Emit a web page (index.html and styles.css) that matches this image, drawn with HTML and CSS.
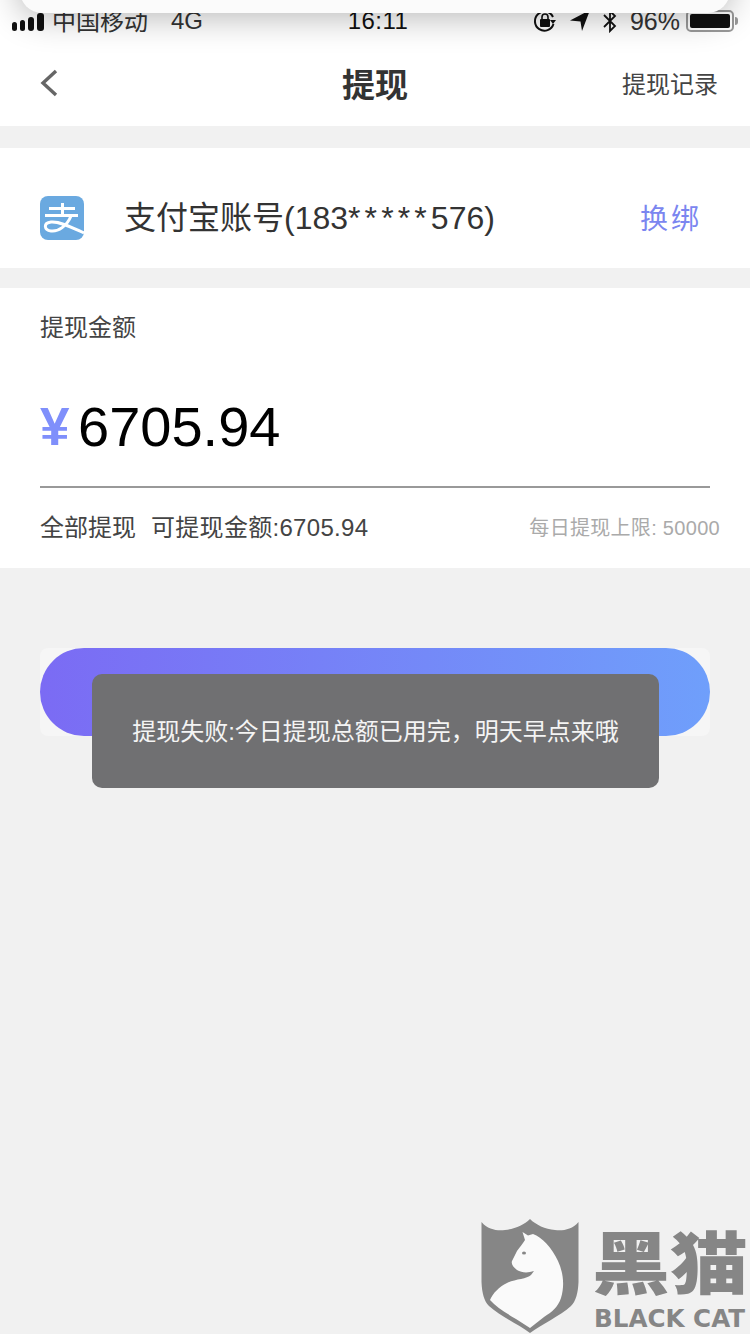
FILE: index.html
```html
<!DOCTYPE html>
<html lang="zh-CN">
<head>
  <meta charset="UTF-8">
  <meta name="viewport" content="width=device-width, initial-scale=1.0">
  <title>提现</title>
  <link rel="stylesheet" href="styles.css">
</head>
<body>
  <div class="notice-edge"></div>

  <div class="status-bar">
    <div class="status-left">
      <div class="signal"><i></i><i></i><i></i><i></i></div>
      <span class="carrier">中国移动</span>
      <span class="net">4G</span>
    </div>
    <div class="status-time">16:11</div>
    <div class="status-right">
      <svg class="ico-lock" width="24" height="24" viewBox="0 0 24 24">
        <path d="M20 8 A9.5 9.5 0 1 0 20.5 15" fill="none" stroke="#111" stroke-width="2"/>
        <path d="M17 11 L23 11 L20 15 Z" fill="#111"/>
        <rect x="7" y="10" width="10" height="8" rx="1" fill="#111"/>
        <path d="M9 10 V8 A3 3 0 0 1 15 8 V10" fill="none" stroke="#111" stroke-width="1.6"/>
      </svg>
      <svg class="ico-loc" width="20" height="22" viewBox="0 0 20 22">
        <path d="M0 10.500 L20 0 L12 21 L10.500 11.500 Z" fill="#111"/>
      </svg>
      <svg class="ico-bt" width="16" height="24" viewBox="0 0 16 24">
        <path d="M2 6 L13 17 L8 22 V2 L13 7 L2 18" fill="none" stroke="#111" stroke-width="1.8"/>
      </svg>
      <span class="battery-text">96%</span>
      <div class="battery"><div class="battery-fill"></div></div>
    </div>
  </div>

  <header class="nav">
    <svg class="back" width="18" height="28" viewBox="0 0 18 28">
      <path d="M16 2 L3 14 L16 26" fill="none" stroke="#666" stroke-width="3.4"/>
    </svg>
    <h1 class="nav-title">提现</h1>
    <a class="nav-link">提现记录</a>
  </header>

  <section class="account">
    <svg class="alipay" width="44" height="44" viewBox="0 0 44 44">
      <path d="M8 0 H36 A8 8 0 0 1 44 8 V36 A8 8 0 0 1 36 44 H8 A8 8 0 0 1 0 36 V8 A8 8 0 0 1 8 0 Z" fill="#6aa9e0"/>
      <path d="M9 12.500 H35 M5 19.500 H38 M22.500 7 V19.500" fill="none" stroke="#fff" stroke-width="3"/>
      <path d="M31 20 C27 30 18 36 11 35 C4 34 3 27 11 26 C20 25 33 32 44 37" fill="none" stroke="#fff" stroke-width="3"/>
    </svg>
    <div class="account-name">支付宝账号(183<span class="mask">*****</span>576)</div>
    <a class="account-change">换绑</a>
  </section>

  <section class="amount-card">
    <div class="amount-label">提现金额</div>
    <div class="amount-row">
      <span class="yen">¥</span>
      <span class="amount">6705.94</span>
    </div>
    <div class="amount-foot">
      <div class="foot-left">
        <a class="take-all">全部提现</a>
        <span class="can-take">可提现金额:6705.94</span>
      </div>
      <div class="foot-limit">每日提现上限: 50000</div>
    </div>
  </section>

  <div class="submit-wrap">
    <div class="submit"></div>
  </div>

  <div class="toast">提现失败:今日提现总额已用完&#65292;明天早点来哦</div>

  <div class="watermark">
    <svg class="wm-shield" width="110" height="119" viewBox="0 0 110 119">
      <path d="M1.500 7 C8 15 18 16 25 15 C35 14 44 10 50 4 C56 10 65 14 75 15 C82 16 92 15 98.500 7 V67 C98 78 96 86 91 91 C80 101 62 109 50 118 C38 109 20 101 9 91 C4 86 2 78 1.500 67 Z" fill="#868686"/>
      <path d="M42.500 17 L48 20.500 L53 19 C62 22 72 33 78 46 C83 57 85 70 81 83 C78 92 72 97 64 102 L50 113 L36 104 C26 98 16 92 10 85 C13 78 19 72 27 68 C35 64 47 64 51 60 L54 56 C48 58 42 58 37 55 C33 52 31 49 32 46 L37 36 C40 32 43 28 45 25 Z" fill="#fafafa"/>
      <ellipse cx="44" cy="38" rx="2" ry="1.500" fill="#868686"/>
    </svg>
    <div class="wm-brand">
      <div class="wm-cn">黑猫</div>
      <div class="wm-en">BLACK CAT</div>
    </div>
  </div>
</body>
</html>
```

FILE: styles.css
```css
* { box-sizing: border-box; margin: 0; padding: 0; }
html, body {
  width: 750px;
  height: 1334px;
  overflow: hidden;
  background: #f1f1f1;
  font-family: "Liberation Sans", "Noto Sans CJK SC", sans-serif;
  color: #333;
}
body { position: relative; }

/* edge of the notification sheet coming over the status bar */
.notice-edge {
  position: absolute;
  top: -40px; left: 20px;
  width: 710px; height: 53px;
  background: #fbfbfb;
  border-radius: 0 0 22px 22px;
  box-shadow: 0 2px 36px rgba(0,0,0,0.32);
  z-index: 5;
}

/* Status bar */
.status-bar {
  height: 44px;
  padding: 0 16px 2px 12px;
  background: #fff;
  display: grid;
  grid-template-columns: 1fr auto 1fr;
  align-items: center;
  color: #111;
  font-size: 24px;
}
.status-left { display: flex; align-items: center; }
.signal { display: flex; align-items: flex-end; gap: 3px; height: 20px; margin-right: 8px; }
.signal i { display: block; background: #111; width: 5px; border-radius: 3px; }
.signal i:nth-child(1) { height: 9px; }
.signal i:nth-child(2) { height: 11px; }
.signal i:nth-child(3) { height: 14px; width: 6px; }
.signal i:nth-child(4) { height: 18px; width: 7px; }
.carrier { color: #333; margin-top: -4px; }
.net { margin-left: 23px; color: #333; }
.status-time { font-weight: 500; padding-left: 10px; letter-spacing: 0.4px; }
.status-right { display: flex; align-items: center; justify-content: flex-end; }
.ico-lock { margin-right: 13px; }
.ico-loc { margin-right: 12px; }
.ico-bt { margin-right: 12px; }
.battery-text { margin-right: 6px; color: #333; font-size: 25px; }
.battery {
  width: 48px; height: 22px;
  border: 2px solid #999;
  border-radius: 5px;
  padding: 2px;
  position: relative;
}
.battery::after {
  content: '';
  position: absolute;
  right: -6px; top: 5px;
  width: 3px; height: 8px;
  background: #999;
  border-radius: 0 3px 3px 0;
}
.battery-fill { height: 100%; background: #111; border-radius: 2px; }

/* Nav */
.nav {
  height: 82px;
  background: #fff;
  padding: 0 32px 5px;
  display: grid;
  grid-template-columns: 1fr auto 1fr;
  align-items: center;
}
.back { margin-left: 8px; }
.nav-title { font-size: 33px; font-weight: 700; color: #333; }
.nav-link { justify-self: end; font-size: 24px; color: #444; }

/* Account row */
.account {
  height: 120px;
  margin-top: 22px;
  padding: 20px 48px 0 40px;
  background: #fff;
  display: flex;
  align-items: center;
}
.account-name { margin: -6px 0 0 40px; font-size: 32px; color: #333; flex: 1; }
.mask { letter-spacing: 4.1px; }
.account-change { margin-top: -2px; font-size: 28px; letter-spacing: 3px; color: #7b86f0; }

/* Amount card */
.amount-card {
  height: 280px;
  margin-top: 20px;
  padding: 26px 30px 0 40px;
  background: #fff;
}
.amount-label { font-size: 24px; line-height: 28px; color: #444; }
.amount-row {
  height: 146px;
  margin-right: 10px;
  padding-top: 24px;
  border-bottom: 2px solid #999;
  display: flex;
  align-items: center;
}
.yen { font-size: 53px; font-weight: 700; color: #7f8ffb; width: 38px; }
.amount { font-size: 56px; color: #000; }
.amount-foot {
  margin-top: 22px;
  display: flex;
  justify-content: space-between;
  align-items: center;
  line-height: 36px;
}
.foot-left { font-size: 24px; color: #444; display: flex; gap: 15px; }
.can-take { letter-spacing: 0.3px; }
.foot-limit { font-size: 20px; letter-spacing: 0.3px; color: #aaa; }

/* Submit */
.submit-wrap {
  margin: 80px 40px 0;
  height: 88px;
  background: #f6f6f6;
  border-radius: 8px;
}
.submit {
  height: 88px;
  border-radius: 44px;
  background: linear-gradient(90deg, #7b6bf4, #6f9ffb);
}

/* Toast */
.toast {
  position: absolute;
  top: 674px; left: 92px;
  width: 567px; height: 114px;
  padding-bottom: 4px;
  background: #707072;
  border-radius: 10px;
  color: #f4f4f4;
  font-size: 24px;
  display: flex;
  align-items: center;
  justify-content: center;
}

/* Watermark */
.watermark {
  position: absolute;
  left: 480px; top: 1215px;
  display: flex;
}
.wm-brand { margin-left: 4px; color: #868686; }
.wm-cn {
  margin: 17px 0 0 -2px;
  font-size: 78px;
  line-height: 76px;
  font-weight: 900;
  white-space: nowrap;
  transform: scaleY(0.88);
  transform-origin: top;
}
.wm-en {
  margin-top: -2px;
  font-family: "DejaVu Sans", sans-serif;
  font-size: 24.6px;
  line-height: 26px;
  font-weight: 700;
  white-space: nowrap;
}
```
